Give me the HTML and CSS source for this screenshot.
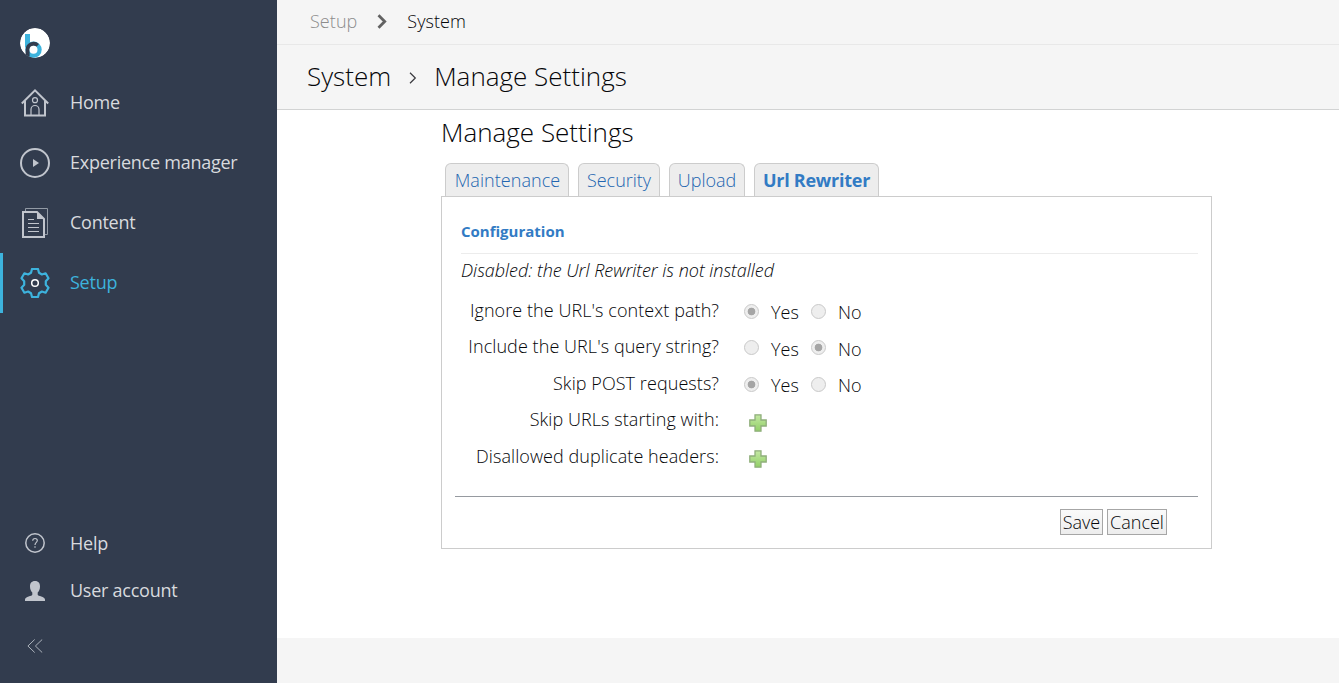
FILE: index.html
```html
<!DOCTYPE html>
<html lang="en">
<head>
<meta charset="utf-8">
<title>Manage Settings</title>
<link rel="stylesheet" href="styles.css">
</head>
<body>
<div class="app">
  <nav class="sidebar">
    <div class="logo">
      <svg width="30" height="30" viewBox="0 0 30 30"><defs><clipPath id="disc"><circle cx="15" cy="15" r="15"/></clipPath></defs><g clip-path="url(#disc)"><circle cx="15" cy="15" r="15" fill="#fff"/><path d="M5 6h5v9l-5 5z" fill="#3db3dd"/><circle cx="13.500" cy="21.800" r="8.200" fill="#3db3dd"/><path d="M7.600 31v-9.300a5.900 5.900 0 0 1 10-4.200" fill="none" stroke="#323c4e" stroke-width="4"/><circle cx="13.500" cy="21.700" r="4" fill="#fff"/></g></svg>
    </div>
    <a class="item"><span class="icon"><svg width="30" height="30" viewBox="0 0 30 30" fill="none" stroke="#c1c5cd"><path d="M1.800 15.500 15 2.300l13.200 13.200M5 13v14.500h20V13" stroke-width="2"/><circle cx="15" cy="12.200" r="2.500" stroke-width="1.200"/><path d="M11 27v-5.500a4 4 0 0 1 8 0V27" stroke-width="1.200"/></svg></span><span class="text">Home</span></a>
    <a class="item"><span class="icon"><svg width="30" height="30" viewBox="0 0 30 30"><circle cx="15" cy="15" r="14" fill="none" stroke="#c1c5cd" stroke-width="2"/><path d="M13 11v8l6-4z" fill="#c1c5cd"/></svg></span><span class="text">Experience manager</span></a>
    <a class="item"><span class="icon"><svg width="30" height="30" viewBox="0 0 30 30" fill="none" stroke="#c1c5cd"><path d="M5.500 3V.5h22v26H25" stroke="#929aa5"/><path d="M3 4h14l7 7v18H3z" stroke-width="2"/><path d="M17 4v7h7z" fill="#c1c5cd" stroke="none"/><path d="M8 11.500h6M8 15.500h11M8 19.500h11M8 23.500h11"/></svg></span><span class="text">Content</span></a>
    <a class="item active"><span class="icon"><svg width="30" height="30" viewBox="0 0 30 30" fill="none"><path d="M12 1h6l1 3.800 2.900 1.700 3.700-1.200 2.900 5-2.700 2.900v3.600l2.700 2.900-2.900 5-3.700-1.200-2.900 1.700-1 3.800h-6l-1-3.800-2.900-1.700-3.700 1.200-2.900-5 2.700-2.900v-3.600l-2.700-2.900 2.900-5 3.700 1.200L11 4.800z" stroke="#3db3dd" stroke-width="2.200" stroke-linejoin="round"/><circle cx="15" cy="15" r="3.300" stroke="#fff" stroke-width="1.500"/></svg></span><span class="text">Setup</span></a>
    <div class="secondary">
      <a class="item small"><span class="icon"><svg width="20" height="20" viewBox="0 0 20 20"><circle cx="10" cy="10" r="9.200" fill="none" stroke="#c1c5cd" stroke-width="1.500"/><path d="M7.700 7.800C7.700 4.700 12.400 4.800 12.300 7.600 12.300 9.500 10 9.300 10 12M10 13.200v1.500" fill="none" stroke="#c1c5cd" stroke-width="1.200"/></svg></span>Help</a>
      <a class="item small"><span class="icon user"><svg width="20" height="20" viewBox="0 0 20 20"><path d="M10 0c3.600 0 5 2.300 5 5.500 0 3-1 4.600-2.300 6v2.200c0 1.500 7.300 1.600 7.300 4.800V20H0v-1.500c0-3.200 7.300-3.300 7.300-4.800v-2.200C6 10.100 5 8.500 5 5.500 5 2.300 6.400 0 10 0z" fill="#c1c5cd"/></svg></span>User account</a>
      <a class="item collapse"><span class="icon"><svg width="16" height="14" viewBox="0 0 16 14"><path d="M7.700.5.900 7l6.800 6.500M15.200.5 8.400 7l6.800 6.500" fill="none" stroke="#adb3bc"/></svg></span></a>
    </div>
  </nav>
  <div class="main">
    <header class="crumbs"><span class="muted">Setup</span><svg width="11" height="15" viewBox="0 0 11 15"><path d="M1.500 1.300 7.700 7.500l-6.200 6.200" fill="none" stroke="#626262" stroke-width="2.800"/></svg><span>System</span></header>
    <header class="titlebar"><span>System</span><svg width="8" height="12" viewBox="0 0 8 12"><path d="M1 .8 6.300 6 1 11.200" fill="none" stroke="#38383d" stroke-width="1.200"/></svg><span>Manage Settings</span></header>
    <main class="page">
      <h1>Manage Settings</h1>
      <div class="tabs"><a class="tab t1">Maintenance</a><a class="tab t2">Security</a><a class="tab t3">Upload</a><a class="tab t4">Url Rewriter</a></div>
      <section class="panel">
        <h2>Configuration</h2>
        <p class="notice">Disabled: the Url Rewriter is not installed</p>
        <div class="rows">
          <div class="row"><label>Ignore the URL's context path?</label><i class="radio on"></i><span class="yes">Yes</span><i class="radio"></i><span>No</span></div>
          <div class="row"><label>Include the URL's query string?</label><i class="radio"></i><span class="yes">Yes</span><i class="radio on"></i><span>No</span></div>
          <div class="row"><label>Skip POST requests?</label><i class="radio on"></i><span class="yes">Yes</span><i class="radio"></i><span>No</span></div>
          <div class="row"><label>Skip URLs starting with:</label><svg class="plus" width="18" height="18" viewBox="0 0 18 18"><defs><linearGradient id="leaf" x2="0" y2="1"><stop stop-color="#c4e8a4"/><stop offset="1" stop-color="#91cf66"/></linearGradient></defs><path d="M6 .8h6V6h5.200v6H12v5.200H6V12H.8V6H6z" fill="url(#leaf)" stroke="#8fae7b" stroke-width="1.300"/></svg></div>
          <div class="row"><label>Disallowed duplicate headers:</label><svg class="plus" width="18" height="18" viewBox="0 0 18 18"><path d="M6 .8h6V6h5.200v6H12v5.200H6V12H.8V6H6z" fill="url(#leaf)" stroke="#8fae7b" stroke-width="1.300"/></svg></div>
        </div>
        <div class="actions"><button class="save">Save</button><button class="cancel">Cancel</button></div>
      </section>
    </main>
    <footer class="footer"></footer>
  </div>
</div>
</body>
</html>
```
FILE: styles.css
```css
* { box-sizing: border-box; }
body { margin: 0; font: 300 18px/24px "Open Sans", sans-serif; color: #050609; background: #fff; }
.app { display: flex; width: 1339px; height: 683px; overflow: hidden; }
.sidebar { width: 277px; display: flex; flex-direction: column; background: #323c4e; color: #d8dade; font-weight: 400; letter-spacing: -.25px; }
.logo { height: 73px; padding: 28px 0 0 20px; }
.item { display: flex; align-items: center; height: 60px; border-left: 3px solid transparent; white-space: nowrap; }
.item.active { color: #3db3dd; border-color: #3db3dd; }
.icon { width: 64px; height: 30px; margin-right: 3px; display: flex; align-items: center; justify-content: center; }
.icon.user { padding-top: 2px; }
.item svg { display: block; }
.text { padding-bottom: 2px; }
.secondary { margin-top: auto; padding-bottom: 10px; }
.item.small { height: 47px; }
.item.collapse { height: 56px; padding-top: 2px; margin-top: 4px; }
.main { flex: 1; display: flex; flex-direction: column; }
.crumbs { height: 45px; display: flex; align-items: center; padding: 0 0 2px 33px; background: #f5f5f5; border-bottom: 1px solid #e8e8e8; }
.crumbs svg { margin: 1px 19px 0 20px; }
.crumbs span { letter-spacing: .05px; }
.muted { color: #8c8c8c; }
.titlebar { height: 65px; display: flex; align-items: center; padding: 0 0 1px 30px; background: #f5f5f5; border-bottom: 1px solid #d2d3d3; font-size: 26px; line-height: 36px; }
.titlebar span { padding-bottom: 1px; }
.titlebar svg { margin: 2px 17px 0 18px; }
.page { flex: 1; width: 935px; padding-left: 164px; }
h1 { margin: 4px 0 13px; font: inherit; font-size: 26px; line-height: 36px; }
.tabs { display: flex; gap: 9px; padding-left: 4px; height: 33px; }
.tab { height: 33px; padding: 4px 0 0; text-align: center; border: 1px solid #ccc; border-bottom: 0; border-radius: 6px 6px 0 0; background: #ededed; color: #2265b0; white-space: nowrap; }
.t1 { width: 124px; letter-spacing: .05px; padding-left: 1px; }
.t2 { width: 82px; }
.t3 { width: 76px; }
.t4 { width: 125px; font-weight: 700; letter-spacing: -.25px; color: #327bc4; }
.panel { height: 353px; border: 1px solid #ccc; padding: 23px 13px 0; }
h2 { margin: 0 0 0 6px; height: 34px; border-bottom: 1px solid #ececec; color: #327bc4; font-size: 15px; line-height: 22px; font-weight: 700; }
.notice { margin: 4px 0 16px 6px; font-style: italic; line-height: 24px; letter-spacing: -.02px; }
.rows { margin-top: -6px; height: 204px; }
.row { display: flex; align-items: center; height: 36.5px; line-height: 24px; white-space: nowrap; }
.row label { width: 264px; margin-right: 25px; text-align: right; letter-spacing: .07px; }
.row:nth-child(even) label { padding-bottom: 1px; }
.row span { margin-top: 4px; }
.radio { width: 15px; height: 15px; margin-right: 12px; margin-top: 2px; border: 1px solid #c9c9c9; border-radius: 50%; background: #eee; }
.radio.on { background: radial-gradient(circle, #a5a5a5 0 3.5px, #eee 4.2px); }
.yes { width: 40px; }
.plus { margin: 6px 0 0 5px; }
.actions { display: flex; justify-content: flex-end; gap: 4px; padding: 12px 31px 0 0; border-top: 1px solid #969aa0; }
button { height: 26px; padding: 0; border: 1px solid #a6a6a6; background: linear-gradient(#fafafa, #ededed); font: inherit; color: inherit; white-space: nowrap; }
.save { width: 43px; }
.cancel { width: 60px; }
.footer { height: 45px; background: #f5f5f5; }
```
